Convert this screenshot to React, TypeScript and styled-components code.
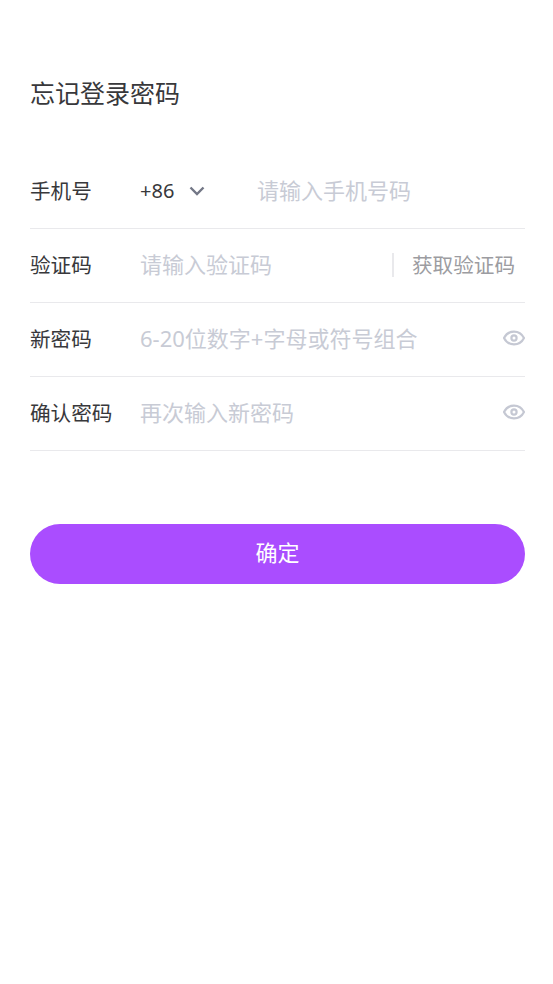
import React from 'react';
import styled, { createGlobalStyle } from 'styled-components';

const FONT = '"Noto Sans", "Noto Sans CJK SC", sans-serif';

const EyeIcon: React.FC = () => (
  <EyeSvg viewBox="0 0 22 16" fill="none">
    <path
      d="M1 8C3.2 3.7 6.8 1.6 11 1.6S18.8 3.7 21 8C18.8 12.3 15.2 14.4 11 14.4S3.2 12.3 1 8Z"
      stroke="#c5c8d3"
      strokeWidth="2.2"
      strokeLinejoin="round"
    />
    <circle cx="11" cy="8" r="2.6" stroke="#c5c8d3" strokeWidth="2.2" />
  </EyeSvg>
);

const App: React.FC = () => (
  <>
    <GlobalStyle />
    <Page>
      <Title>忘记登录密码</Title>
      <Form>
        <Row>
          <Label>手机号</Label>
          <CountryCode>
            +86
            <Chevron viewBox="0 0 16 10" fill="none">
              <path d="M1.5 1.5L8 8L14.5 1.5" stroke="#737786" strokeWidth="2.4" />
            </Chevron>
          </CountryCode>
          <Placeholder>请输入手机号码</Placeholder>
        </Row>
        <Row>
          <Label>验证码</Label>
          <Placeholder>请输入验证码</Placeholder>
          <CodeButton>获取验证码</CodeButton>
        </Row>
        <Row>
          <Label>新密码</Label>
          <Placeholder>6-20位数字+字母或符号组合</Placeholder>
          <EyeIcon />
        </Row>
        <Row>
          <Label>确认密码</Label>
          <Placeholder>再次输入新密码</Placeholder>
          <EyeIcon />
        </Row>
      </Form>
      <Submit>确定</Submit>
    </Page>
  </>
);

export default App;

const GlobalStyle = createGlobalStyle`
  html, body {
    margin: 0;
    padding: 0;
    background: #fff;
  }
`;

const Page = styled.div`
  box-sizing: border-box;
  width: 553px;
  height: 984px;
  padding: 76px 28px 0 30px;
  font-family: ${FONT};
  background: #fff;
`;

const Title = styled.h1`
  margin: 0 0 45px;
  font-size: 25px;
  line-height: 34px;
  font-weight: 400;
  color: #38383b;
`;

const Form = styled.div`
  display: flex;
  flex-direction: column;
`;

const Row = styled.div`
  box-sizing: border-box;
  display: flex;
  align-items: center;
  height: 74px;
  padding-bottom: 3px;
  border-bottom: 1px solid #e9e9ec;
`;

const Label = styled.span`
  flex: 0 0 110px;
  margin-top: 2px;
  font-size: 20.6px;
  line-height: 28px;
  color: #38383b;
`;

const CountryCode = styled.span`
  display: flex;
  align-items: center;
  flex: 0 0 117px;
  margin-top: 2px;
  font-size: 20px;
  line-height: 28px;
  color: #38383b;
`;

const Chevron = styled.svg`
  width: 16px;
  height: 10px;
  margin-left: 15px;
`;

const Placeholder = styled.span`
  flex: 1;
  font-size: 22px;
  line-height: 28px;
  color: #c8cbd5;
`;

const CodeButton = styled.span`
  margin-top: 2px;
  padding: 0 10px 0 18px;
  border-left: 2px solid #e9e9ec;
  font-size: 20.6px;
  line-height: 24px;
  color: #9c9ca1;
`;

const EyeSvg = styled.svg`
  width: 22px;
  height: 16px;
`;

const Submit = styled.button`
  display: block;
  width: 100%;
  height: 60px;
  margin-top: 73px;
  padding: 0 0 4px;
  border: none;
  border-radius: 30px;
  background: #aa4dff;
  color: #fff;
  font-family: ${FONT};
  font-size: 22px;
  line-height: 28px;
`;
